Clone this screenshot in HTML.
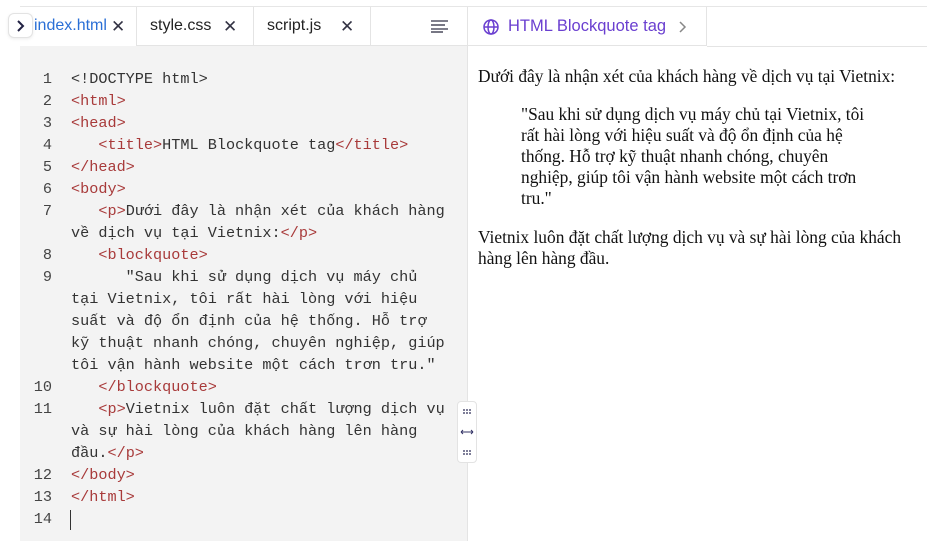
<!DOCTYPE html>
<html><head><meta charset="utf-8"><style>
*{margin:0;padding:0;box-sizing:border-box}
body{width:927px;height:541px;background:#fff;position:relative;overflow:hidden;font-family:"Liberation Sans",sans-serif}
.topline{position:absolute;left:20px;right:0;top:6px;height:1px;background:#e6e6e6}
.editor{position:absolute;left:20px;top:7px;width:448px;height:534px;background:#f3f3f3;border-right:1px solid #e4e4e4}
.tab{position:absolute;top:7px;height:39px;background:#fff;border-right:1px solid #e4e4e4;border-bottom:1px solid #e4e4e4;font-size:16px;color:#222}
.tab span{position:absolute;top:10px}
.x{position:absolute;top:10px;font-size:17px;color:#334}
.code{position:absolute;font-family:"Liberation Mono",monospace;font-size:15.2px;color:#333;white-space:pre;line-height:22px}
.ln{position:absolute;left:20px;width:32px;text-align:right;font-family:"Liberation Mono",monospace;font-size:15.2px;color:#444;line-height:22px}
.t{color:#a83a3a}
.prev{position:absolute;font-family:"Liberation Serif",serif;font-size:17.4px;color:#111;line-height:21px}
</style></head><body>
<div class="topline"></div>
<div class="editor"></div>
<div class="tab" style="left:20px;width:117px;border-bottom:none"><span style="left:14px;color:#2a6fd6">index.html</span><span class="x" style="left:91px;top:10px">✕</span></div>
<div class="tab" style="left:137px;width:117px"><span style="left:13px">style.css</span><span class="x" style="left:86px">✕</span></div>
<div class="tab" style="left:254px;width:117px"><span style="left:13px">script.js</span><span class="x" style="left:86px">✕</span></div>
<div class="tab" style="left:371px;width:97px;border-right:1px solid #e4e4e4"><svg style="position:absolute;left:60px;top:12px" width="18" height="14"><g stroke="#556" stroke-width="1.6"><line x1="0" y1="2" x2="17" y2="2"/><line x1="0" y1="6" x2="14" y2="6"/><line x1="0" y1="10" x2="17" y2="10"/><line x1="0" y1="13" x2="12" y2="13"/></g></svg></div>
<div style="position:absolute;left:8px;top:13px;width:25px;height:25px;background:#fff;border:1px solid #e3e3e3;border-radius:6px;box-shadow:0 1px 3px rgba(0,0,0,.08)"><svg width="24" height="24"><path d="M9 7l5 5-5 5" stroke="#224" stroke-width="2" fill="none"/></svg></div>

<div class="tab" style="left:468px;width:239px"><svg style="position:absolute;left:14px;top:11px" width="18" height="18" viewBox="0 0 18 18" fill="none" stroke="#6a3fd0" stroke-width="1.5"><circle cx="9" cy="9" r="7"/><ellipse cx="9" cy="9" rx="3" ry="7"/><line x1="2" y1="9" x2="16" y2="9"/></svg><span style="left:40px;color:#6a3fd0;font-size:16.5px">HTML Blockquote tag</span><svg style="position:absolute;left:210px;top:14px" width="10" height="12"><path d="M2 1l5 5-5 5" stroke="#888" stroke-width="1.5" fill="none"/></svg></div>
<div style="position:absolute;left:707px;top:46px;right:0;height:1px;background:#e4e4e4"></div>

<div class="ln" style="top:68px">1<br>2<br>3<br>4<br>5<br>6<br>7<br><br>8<br>9<br><br><br><br><br>10<br>11<br><br><br>12<br>13<br>14</div>
<div class="code" style="left:71px;top:68px">&lt;!DOCTYPE html&gt;
<span class="t">&lt;html&gt;</span>
<span class="t">&lt;head&gt;</span>
   <span class="t">&lt;title&gt;</span>HTML Blockquote tag<span class="t">&lt;/title&gt;</span>
<span class="t">&lt;/head&gt;</span>
<span class="t">&lt;body&gt;</span>
   <span class="t">&lt;p&gt;</span>Dưới đây là nhận xét của khách hàng
về dịch vụ tại Vietnix:<span class="t">&lt;/p&gt;</span>
   <span class="t">&lt;blockquote&gt;</span>
      "Sau khi sử dụng dịch vụ máy chủ
tại Vietnix, tôi rất hài lòng với hiệu
suất và độ ổn định của hệ thống. Hỗ trợ
kỹ thuật nhanh chóng, chuyên nghiệp, giúp
tôi vận hành website một cách trơn tru."
   <span class="t">&lt;/blockquote&gt;</span>
   <span class="t">&lt;p&gt;</span>Vietnix luôn đặt chất lượng dịch vụ
và sự hài lòng của khách hàng lên hàng
đầu.<span class="t">&lt;/p&gt;</span>
<span class="t">&lt;/body&gt;</span>
<span class="t">&lt;/html&gt;</span>
</div>
<div style="position:absolute;left:70px;top:510px;width:1px;height:20px;background:#333"></div>

<div style="position:absolute;left:457px;top:401px;width:20px;height:62px;background:#fff;border:1px solid #e3e3e3;border-radius:4px">
<svg width="18" height="60"><g fill="#557"><circle cx="6" cy="8" r="1"/><circle cx="9" cy="8" r="1"/><circle cx="12" cy="8" r="1"/><circle cx="6" cy="11" r="1"/><circle cx="9" cy="11" r="1"/><circle cx="12" cy="11" r="1"/><circle cx="6" cy="49" r="1"/><circle cx="9" cy="49" r="1"/><circle cx="12" cy="49" r="1"/><circle cx="6" cy="52" r="1"/><circle cx="9" cy="52" r="1"/><circle cx="12" cy="52" r="1"/></g><path d="M3 30h12M3 30l2-2M3 30l2 2M15 30l-2-2M15 30l-2 2" stroke="#336" stroke-width="1" fill="none"/></svg></div>

<div class="prev" style="left:478px;top:66px;white-space:nowrap">Dưới đây là nhận xét của khách hàng về dịch vụ tại Vietnix:</div>
<div class="prev" style="left:521px;top:104px;width:356px">"Sau khi sử dụng dịch vụ máy chủ tại Vietnix, tôi<br>rất hài lòng với hiệu suất và độ ổn định của hệ<br>thống. Hỗ trợ kỹ thuật nhanh chóng, chuyên<br>nghiệp, giúp tôi vận hành website một cách trơn<br>tru."</div>
<div class="prev" style="left:478px;top:227px;width:449px">Vietnix luôn đặt chất lượng dịch vụ và sự hài lòng của khách<br>hàng lên hàng đầu.</div>
</body></html>
